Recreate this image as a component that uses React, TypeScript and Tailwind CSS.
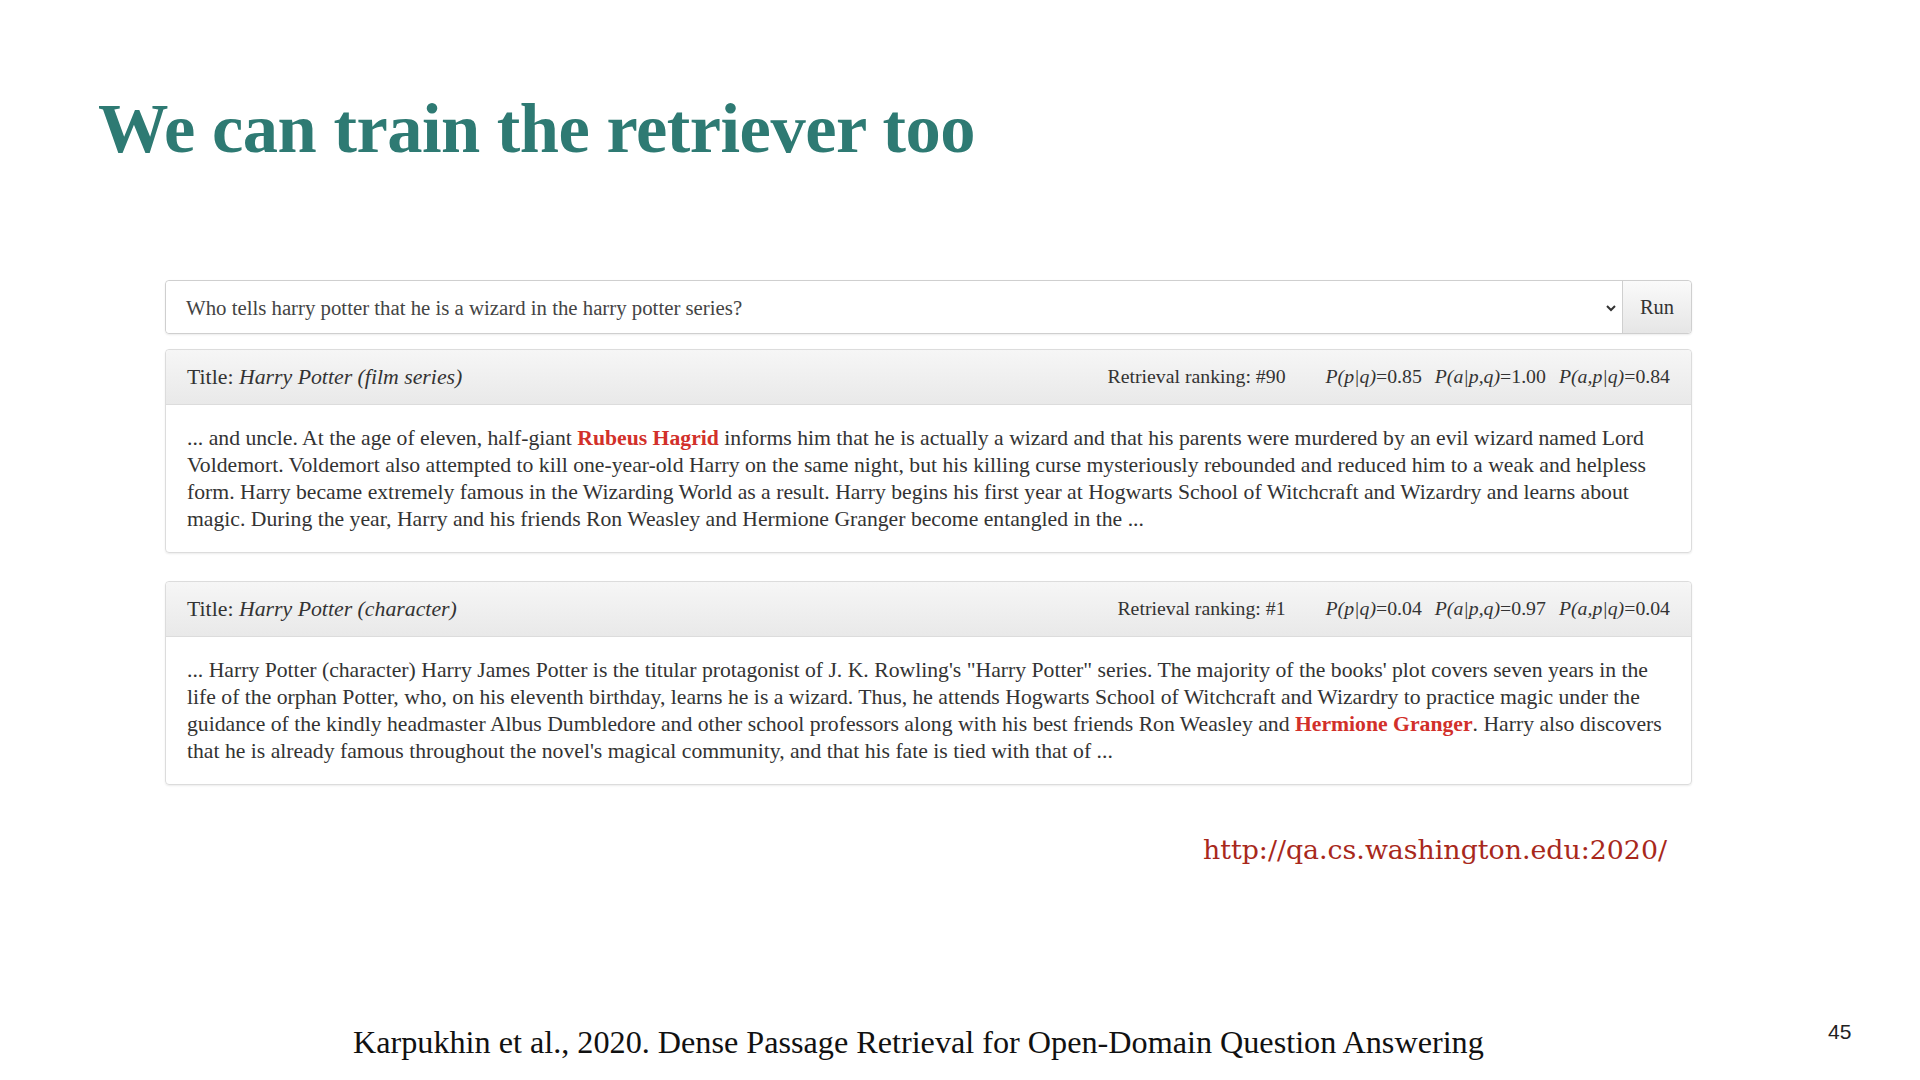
import React from "react";

const serif = { fontFamily: '"Liberation Serif", "DejaVu Serif", serif' };

function Header({ title, rank, a, b, c }: { title: string; rank: string; a: string; b: string; c: string }) {
  return (
    <div className="flex items-center justify-between h-[55px] px-[21px] bg-gradient-to-b from-[#f6f6f6] to-[#e9e9e9] border-b border-[#dcdcdc] rounded-t-[4px] text-[21.8px] text-[#333]">
      <div>
        Title: <i>{title}</i>
      </div>
      <div className="flex items-center text-[19.8px]">
        <span className="mr-[40px]">Retrieval ranking: {rank}</span>
        <span><i>P(p|q)</i>={a}</span>
        <span className="ml-[13px]"><i>P(a|p,q)</i>={b}</span>
        <span className="ml-[13px]"><i>P(a,p|q)</i>={c}</span>
      </div>
    </div>
  );
}

function Red({ children }: { children: React.ReactNode }) {
  return <b className="text-[#d2302a]">{children}</b>;
}

export default function App() {
  return (
    <div className="relative w-[1920px] h-[1080px] bg-white overflow-hidden" style={serif}>
      <h1 className="pl-[98px] pt-[93px] text-[70.5px] leading-[70px] font-bold text-[#2e7a73] tracking-[-0.5px]">
        We can train the retriever too
      </h1>

      <div className="ml-[165px] w-[1527px] mt-[117px]">
        {/* search bar */}
        <div className="flex h-[54px] border border-[#cfcfcf] rounded-[4px] shadow-[0_1px_2px_rgba(0,0,0,0.08)]">
          <div className="flex-1 flex items-center justify-between pl-[20px] pr-[5px] text-[20.8px] text-[#444] bg-white rounded-l-[4px]">
            <span className="mt-[2px]">Who tells harry potter that he is a wizard in the harry potter series?</span>
            <svg width="12" height="12" viewBox="0 0 12 12" className="mt-[1px]">
              <path d="M2 4 L6 8 L10 4" fill="none" stroke="#333" strokeWidth="2" />
            </svg>
          </div>
          <div className="w-[69px] flex items-center justify-center border-l border-[#cfcfcf] bg-gradient-to-b from-[#fafafa] to-[#e6e6e6] text-[20.5px] text-[#333] rounded-r-[4px]">
            Run
          </div>
        </div>

        {/* card 1 */}
        <div className="mt-[15px] border border-[#dcdcdc] rounded-[4px] shadow-[0_1px_2px_rgba(0,0,0,0.08)]">
          <Header title="Harry Potter (film series)" rank="#90" a="0.85" b="1.00" c="0.84" />
          <div className="px-[21px] pt-[20px] pb-[19px] text-[21.7px] leading-[27px] text-[#333] whitespace-nowrap">
            <div>... and uncle. At the age of eleven, half-giant <Red>Rubeus Hagrid</Red> informs him that he is actually a wizard and that his parents were murdered by an evil wizard named Lord</div>
            <div>Voldemort. Voldemort also attempted to kill one-year-old Harry on the same night, but his killing curse mysteriously rebounded and reduced him to a weak and helpless</div>
            <div>form. Harry became extremely famous in the Wizarding World as a result. Harry begins his first year at Hogwarts School of Witchcraft and Wizardry and learns about</div>
            <div>magic. During the year, Harry and his friends Ron Weasley and Hermione Granger become entangled in the ...</div>
          </div>
        </div>

        {/* card 2 */}
        <div className="mt-[28px] border border-[#dcdcdc] rounded-[4px] shadow-[0_1px_2px_rgba(0,0,0,0.08)]">
          <Header title="Harry Potter (character)" rank="#1" a="0.04" b="0.97" c="0.04" />
          <div className="px-[21px] pt-[20px] pb-[19px] text-[21.7px] leading-[27px] text-[#333] whitespace-nowrap">
            <div>... Harry Potter (character) Harry James Potter is the titular protagonist of J. K. Rowling's "Harry Potter" series. The majority of the books' plot covers seven years in the</div>
            <div>life of the orphan Potter, who, on his eleventh birthday, learns he is a wizard. Thus, he attends Hogwarts School of Witchcraft and Wizardry to practice magic under the</div>
            <div>guidance of the kindly headmaster Albus Dumbledore and other school professors along with his best friends Ron Weasley and <Red>Hermione Granger</Red>. Harry also discovers</div>
            <div>that he is already famous throughout the novel's magical community, and that his fate is tied with that of ...</div>
          </div>
        </div>

        <div className="flex justify-end pr-[25px] mt-[48px]">
          <span className="text-[26.8px] leading-[34px] text-[#a8281b]" style={{ fontFamily: '"DejaVu Serif", "Liberation Serif", serif' }}>
            http://qa.cs.washington.edu:2020/
          </span>
        </div>
      </div>

      <div className="absolute left-[353px] top-[1023px]">
        <span className="text-[32.2px] leading-[38px] text-[#111] whitespace-nowrap">
          Karpukhin et al., 2020. Dense Passage Retrieval for Open-Domain Question Answering
        </span>
      </div>
      <div className="absolute left-[1828px] top-[1016px] text-[21px] text-[#222]" style={{ fontFamily: '"Liberation Sans", Arial, sans-serif' }}>
        45
      </div>
    </div>
  );
}
